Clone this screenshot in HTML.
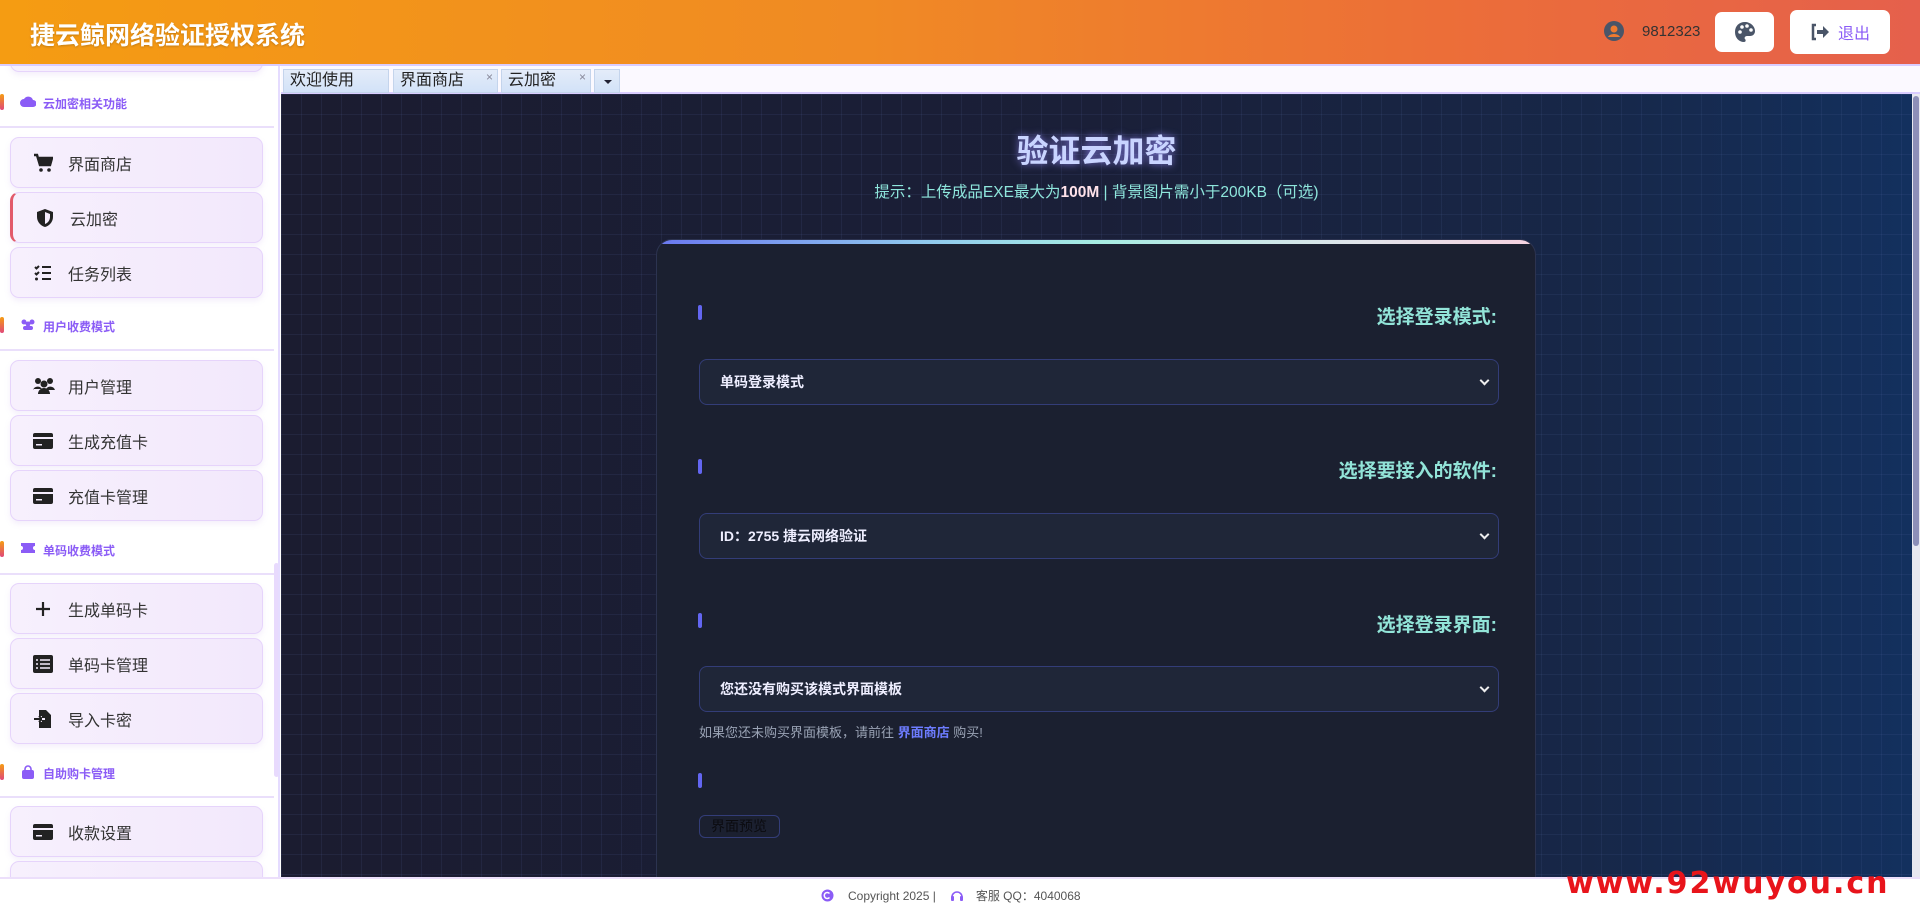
<!DOCTYPE html>
<html><head><meta charset="utf-8"><style>
*{box-sizing:border-box;margin:0;padding:0}
body{width:1920px;height:907px;overflow:hidden;font-family:"Liberation Sans","Noto Sans CJK SC",sans-serif;background:#fff;position:relative}
.hdr{position:absolute;left:0;top:0;width:1920px;height:66px;background:linear-gradient(90deg,#f59c12,#f08a24 45%,#ec6e38 75%,#e5604c);border-bottom:2px solid #d9ccff}
.hdr h1{position:absolute;left:30px;top:16px;font-size:25px;color:#fff;font-weight:bold;text-shadow:0 1px 2px rgba(0,0,0,.2)}
.user{position:absolute;left:1604px;top:21px;display:flex;align-items:center;font-size:15px;color:#333}
.btn{position:absolute;background:#fff;border-radius:7px;display:flex;align-items:center;justify-content:center}
.side{position:absolute;left:0;top:66px;width:280px;height:811px;overflow:hidden;background:#fff;border-right:2px solid #e5dcff}
.card{position:absolute;left:10px;width:253px;height:51px;border:1px solid #e6d4fb;border-radius:9px;background:linear-gradient(90deg,#f7f0fd,#f2e8fc);box-shadow:0 3px 6px rgba(180,150,230,.15);display:flex;align-items:center;font-size:16px;color:#333}
.card svg{position:absolute;left:22px}
.card span{position:absolute;left:57px}
.sec{position:absolute;left:0;width:274px;height:40px;font-size:12px;font-weight:bold;color:#8b5cf6;border-bottom:2px solid #eadffb}
.sec .bar{position:absolute;left:0;top:6px;width:4px;height:16px;border-radius:2px;background:linear-gradient(#f59c12,#e0487a)}
.sec .ic{position:absolute;left:20px;top:7px}
.sec .t{position:absolute;left:43px;top:7px}
.tabs{position:absolute;left:281px;top:66px;width:1639px;height:28px;background:#fbf9ff;border-bottom:2px solid #d9ccff}
.tab{position:absolute;top:3px;height:24px;background:linear-gradient(#e4ecf9,#d2e2f8);border:1px solid #c4d4ec;font-size:16px;color:#222;padding-left:6px;line-height:22px}
.tab i{position:absolute;right:4px;top:-4px;font-style:normal;font-size:12px;color:#889}
.main{position:absolute;left:281px;top:94px;width:1631px;height:783px;overflow:hidden;background:linear-gradient(90deg,#1b1c30,#1a1f38 50%,#172748 80%,#13305e);}
.grid{position:absolute;inset:0;background-image:linear-gradient(rgba(90,110,170,.12) 1px,transparent 1px),linear-gradient(90deg,rgba(90,110,170,.12) 1px,transparent 1px);background-size:20px 20px}
.scr{position:absolute;left:1912px;top:94px;width:8px;height:783px;background:#e8e8f0}
.scr div{position:absolute;left:1px;top:2px;width:6px;height:450px;background:#8d8fb8;border-radius:3px}
.title{position:absolute;left:0;width:1631px;top:32px;text-align:center;font-size:32px;font-weight:bold;color:#c9d4ff;text-shadow:0 0 8px rgba(150,140,255,.8)}
.hint{position:absolute;left:0;width:1631px;top:86px;text-align:center;font-size:15.5px;color:#8ee6dc}
.hint b{color:#ffe2ea}
.box{position:absolute;left:375px;top:145px;width:880px;height:700px;background:#1b2030;border:1px solid #2c3350;border-radius:16px;overflow:hidden}
.box .top{position:absolute;left:0;top:0;width:100%;height:4px;background:linear-gradient(90deg,#6a78f0,#8fc8ee 30%,#a6ece2 50%,#e0e4ea 80%,#f6d2e0)}
.lbar{position:absolute;left:41px;width:4px;height:15px;border-radius:2px;background:#6366f1}
.lab{position:absolute;right:38px;font-size:19px;font-weight:bold;color:#92e4d8}
.sel{position:absolute;left:42px;width:800px;height:46px;background:#1f2638;border:1px solid #333d78;border-radius:8px;font-size:14px;color:#eef;font-weight:bold;padding-left:20px;line-height:44px}
.sel:after{content:"";position:absolute;right:10px;top:17px;width:5px;height:5px;border-right:2px solid #eee;border-bottom:2px solid #eee;transform:rotate(45deg)}
.foot{position:absolute;left:0;top:877px;width:1920px;height:30px;background:#fff;border-top:2px solid #ecdffb;font-size:12px;color:#555}
.wm{position:absolute;left:1566px;top:866px;font-size:30px;font-weight:bold;color:#e8141b;letter-spacing:2px;font-family:"DejaVu Sans",sans-serif}
</style></head><body>
<div class="hdr"><h1>捷云鲸网络验证授权系统</h1>
<div class="user"><svg width="20" height="20" viewBox="0 0 20 20"><circle cx="10" cy="10" r="10" fill="#4a5568"/><circle cx="10" cy="8" r="3.5" fill="#ee7a30"/><path d="M4 16c2-4 10-4 12 0" fill="#ee7a30"/></svg><span style="margin-left:18px">9812323</span></div>
<div class="btn" style="left:1715px;top:12px;width:59px;height:40px"><svg width="22" height="22" viewBox="0 0 22 22"><path d="M11 1C5 1 1 5 1 11s4 10 9 10c2 0 2-2 1-3s0-3 2-3h3c3 0 5-2 5-5C21 5 16 1 11 1z" fill="#4a5568"/><circle cx="6" cy="11" r="1.8" fill="#fff"/><circle cx="8" cy="6" r="1.8" fill="#fff"/><circle cx="13" cy="5" r="1.8" fill="#fff"/><circle cx="17" cy="9" r="1.8" fill="#fff"/></svg></div>
<div class="btn" style="left:1790px;top:10px;width:100px;height:44px;font-size:16px;color:#8b5cf6"><svg width="20" height="18" viewBox="0 0 20 18" style="margin-right:8px"><path d="M6 2H3v14h3" stroke="#4a5568" stroke-width="2.5" fill="none"/><path d="M7 7h6V3l6 6-6 6v-4H7z" fill="#4a5568"/></svg>退出</div>
</div>
<div class="side">
<div class="card" style="top:-45px"></div>
<div class="sec" style="top:22px"><div class="bar"></div><svg class="ic" width="16" height="12"><path d="M4 12a4 4 0 0 1 0-8 5 5 0 0 1 9 1 3.5 3.5 0 0 1 0 7z" fill="#8b5cf6"/></svg><span class="t">云加密相关功能</span></div>
<div class="card" style="top:71px"><svg width="20" height="20" viewBox="0 0 20 20"><path d="M1 2h3l3 10h10l2-7H6" stroke="#222" stroke-width="2.5" fill="none"/><rect x="6" y="5" width="12" height="7" fill="#222"/><circle cx="8" cy="17" r="1.8" fill="#222"/><circle cx="16" cy="17" r="1.8" fill="#222"/></svg><span>界面商店</span></div>
<div class="card" style="top:126px;border-left:3px solid #e25a6a"><svg width="20" height="20" viewBox="0 0 20 20"><path d="M10 1l8 3v5c0 5-4 9-8 10C6 18 2 14 2 9V4z" fill="#222"/><path d="M10 4l5 2v3c0 3-2 6-5 7z" fill="#f5edfd"/></svg><span>云加密</span></div>
<div class="card" style="top:181px"><svg width="20" height="20" viewBox="0 0 20 20"><path d="M2 4l1.5 1.5L6 3M2 10l1.5 1.5L6 9M9 4h9M9 10h9M9 16h9" stroke="#222" stroke-width="2" fill="none"/><circle cx="3.5" cy="16" r="1.5" fill="#222"/></svg><span>任务列表</span></div>
<div class="sec" style="top:245px"><div class="bar"></div><svg class="ic" width="16" height="12"><circle cx="4" cy="4" r="2.5" fill="#8b5cf6"/><circle cx="12" cy="4" r="2.5" fill="#8b5cf6"/><circle cx="8" cy="6" r="2.5" fill="#8b5cf6"/><rect x="3" y="8" width="10" height="4" rx="2" fill="#8b5cf6"/></svg><span class="t">用户收费模式</span></div>
<div class="card" style="top:294px"><svg width="22" height="20" viewBox="0 0 22 20"><circle cx="5" cy="5" r="3" fill="#222"/><circle cx="17" cy="5" r="3" fill="#222"/><circle cx="11" cy="8" r="3.5" fill="#222"/><path d="M0 14a5 5 0 0 1 9-1H0zM13 13a5 5 0 0 1 9 1h-9zM5 18a6 6 0 0 1 12 0z" fill="#222"/></svg><span>用户管理</span></div>
<div class="card" style="top:349px"><svg width="20" height="18" viewBox="0 0 20 18"><rect x="0" y="1" width="20" height="16" rx="2" fill="#222"/><rect x="0" y="5" width="20" height="2" fill="#f5edfd"/><rect x="3" y="12" width="6" height="1.5" fill="#f5edfd"/></svg><span>生成充值卡</span></div>
<div class="card" style="top:404px"><svg width="20" height="18" viewBox="0 0 20 18"><rect x="0" y="1" width="20" height="16" rx="2" fill="#222"/><rect x="0" y="5" width="20" height="2" fill="#f5edfd"/><rect x="3" y="12" width="6" height="1.5" fill="#f5edfd"/></svg><span>充值卡管理</span></div>
<div class="sec" style="top:469px"><div class="bar"></div><svg class="ic" width="16" height="12"><path d="M1 1h14v3a2 2 0 0 0 0 4v3H1V8a2 2 0 0 0 0-4z" fill="#8b5cf6"/></svg><span class="t">单码收费模式</span></div>
<div class="card" style="top:517px"><svg width="20" height="20" viewBox="0 0 20 20"><path d="M10 3v14M3 10h14" stroke="#222" stroke-width="2.2"/></svg><span>生成单码卡</span></div>
<div class="card" style="top:572px"><svg width="20" height="18" viewBox="0 0 20 18"><rect x="0" y="0" width="20" height="18" rx="2" fill="#222"/><path d="M3 5h2M3 9h2M3 13h2M7 5h10M7 9h10M7 13h10" stroke="#f5edfd" stroke-width="1.6"/></svg><span>单码卡管理</span></div>
<div class="card" style="top:627px"><svg width="20" height="20" viewBox="0 0 20 20"><path d="M6 1h7l5 5v13H6v-6h3v-6H6z" fill="#222"/><path d="M1 10h8M6 7l3 3-3 3" stroke="#222" stroke-width="2" fill="none"/><path d="M12 10h-3" stroke="#f5edfd" stroke-width="2"/></svg><span>导入卡密</span></div>
<div class="sec" style="top:692px"><div class="bar"></div><svg class="ic" width="16" height="14"><path d="M5 5V4a3 3 0 0 1 6 0v1" stroke="#8b5cf6" stroke-width="1.6" fill="none"/><rect x="2" y="5" width="12" height="9" rx="2" fill="#8b5cf6"/></svg><span class="t">自助购卡管理</span></div>
<div class="card" style="top:740px"><svg width="20" height="18" viewBox="0 0 20 18"><rect x="0" y="1" width="20" height="16" rx="2" fill="#222"/><rect x="0" y="5" width="20" height="2" fill="#f5edfd"/><rect x="3" y="12" width="6" height="1.5" fill="#f5edfd"/></svg><span>收款设置</span></div>
<div class="card" style="top:795px"></div>
<div style="position:absolute;left:274px;top:497px;width:5px;height:214px;background:#e8dafd;border-radius:3px"></div>
</div>
<div class="tabs">
<div class="tab" style="left:2px;width:106px">欢迎使用</div>
<div class="tab" style="left:112px;width:105px">界面商店<i>×</i></div>
<div class="tab" style="left:220px;width:90px">云加密<i>×</i></div>
<div class="tab" style="left:313px;width:26px;padding:0"><svg width="26" height="22"><path d="M9 10h8l-4 4z" fill="#223"/></svg></div>
</div>
<div class="main"><div class="grid"></div>
<div class="title">验证云加密</div>
<div class="hint">提示：上传成品EXE最大为<b>100M</b> | 背景图片需小于200KB（可选)</div>
<div class="box"><div class="top"></div>
<div class="lbar" style="top:65px"></div><div class="lab" style="top:62px">选择登录模式:</div>
<div class="sel" style="top:119px">单码登录模式</div>
<div class="lbar" style="top:219px"></div><div class="lab" style="top:216px">选择要接入的软件:</div>
<div class="sel" style="top:273px">ID：2755 捷云网络验证</div>
<div class="lbar" style="top:373px"></div><div class="lab" style="top:370px">选择登录界面:</div>
<div class="sel" style="top:426px">您还没有购买该模式界面模板</div>
<div style="position:absolute;left:42px;top:482px;font-size:13px;color:#9aa3b5">如果您还未购买界面模板，请前往 <b style="color:#6d7cff">界面商店</b> 购买!</div>
<div class="lbar" style="top:533px"></div>
<div style="position:absolute;left:42px;top:575px;width:81px;height:23px;border:1px solid #333d78;border-radius:6px;font-size:14px;color:#111;line-height:21px;padding-left:11px;background:#1b2030"><span style="color:#0b0b10">界面预览</span></div>
</div>
</div>
<div class="scr"><div></div></div>
<div class="foot"><div style="position:absolute;left:821px;top:8px;display:flex;align-items:center"><svg width="13" height="13"><circle cx="6.5" cy="6.5" r="6" fill="#8b5cf6"/><path d="M8.5 4.5a3 3 0 1 0 0 4" stroke="#fff" stroke-width="1.5" fill="none"/></svg><span style="margin-left:14px">Copyright 2025 |</span><svg width="14" height="14" style="margin-left:14px"><path d="M2 8a5 5 0 0 1 10 0" stroke="#8b5cf6" stroke-width="1.6" fill="none"/><rect x="1" y="7" width="3" height="5" rx="1" fill="#8b5cf6"/><rect x="10" y="7" width="3" height="5" rx="1" fill="#8b5cf6"/></svg><span style="margin-left:12px">客服 QQ：4040068</span></div></div>
<div class="wm">www.92wuyou.cn</div>
</body></html>
